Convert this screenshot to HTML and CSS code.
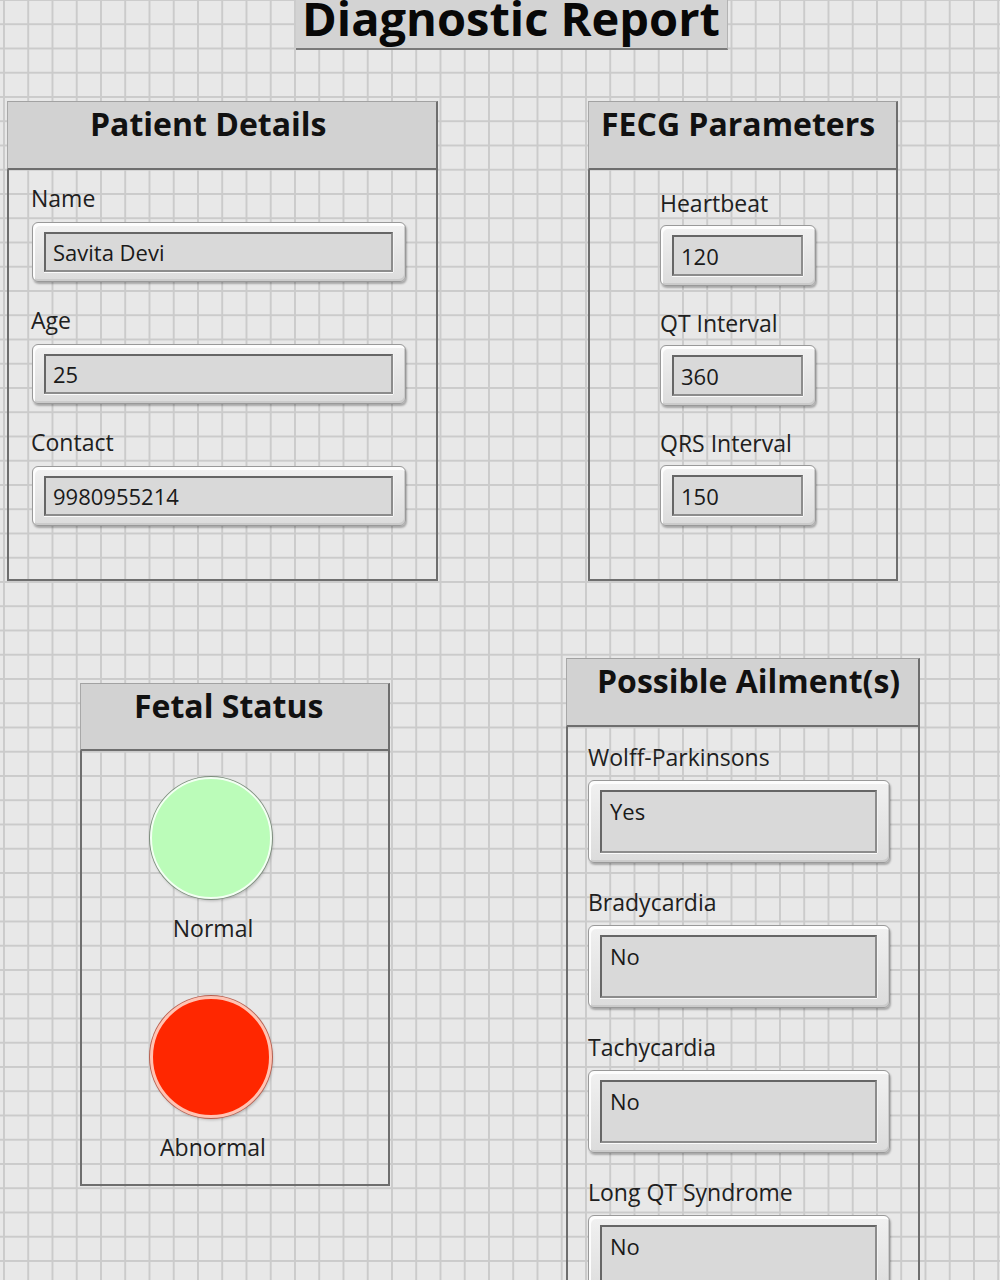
FILE: index.html
```html
<!DOCTYPE html>
<html lang="en">
<head>
<meta charset="utf-8">
<title>Diagnostic Report</title>
<link rel="stylesheet" href="styles.css">
</head>
<body>
<div class="canvas">
  <div class="title-row">
    <h1 class="title">Diagnostic Report</h1>
  </div>

  <div class="row row-top">
    <section class="panel panel-patient">
      <div class="panel-head"><h2>Patient Details</h2></div>
      <div class="panel-body">
        <div class="ctl">
          <div class="ctl-label">Name</div>
          <div class="field"><div class="field-inner">Savita Devi</div></div>
        </div>
        <div class="ctl">
          <div class="ctl-label">Age</div>
          <div class="field"><div class="field-inner">25</div></div>
        </div>
        <div class="ctl">
          <div class="ctl-label">Contact</div>
          <div class="field"><div class="field-inner">9980955214</div></div>
        </div>
      </div>
    </section>

    <section class="panel panel-fecg">
      <div class="panel-head"><h2>FECG Parameters</h2></div>
      <div class="panel-body">
        <div class="ctl">
          <div class="ctl-label">Heartbeat</div>
          <div class="field"><div class="field-inner">120</div></div>
        </div>
        <div class="ctl">
          <div class="ctl-label">QT Interval</div>
          <div class="field"><div class="field-inner">360</div></div>
        </div>
        <div class="ctl">
          <div class="ctl-label">QRS Interval</div>
          <div class="field"><div class="field-inner">150</div></div>
        </div>
      </div>
    </section>
  </div>

  <div class="row row-bottom">
    <section class="panel panel-fetal">
      <div class="panel-head"><h2>Fetal Status</h2></div>
      <div class="panel-body">
        <div class="led-item">
          <div class="led led-green"></div>
          <div class="led-label">Normal</div>
        </div>
        <div class="led-item">
          <div class="led led-red"></div>
          <div class="led-label">Abnormal</div>
        </div>
      </div>
    </section>

    <section class="panel panel-ail">
      <div class="panel-head"><h2>Possible Ailment(s)</h2></div>
      <div class="panel-body">
        <div class="ctl">
          <div class="ctl-label">Wolff-Parkinsons</div>
          <div class="field"><div class="field-inner">Yes</div></div>
        </div>
        <div class="ctl">
          <div class="ctl-label">Bradycardia</div>
          <div class="field"><div class="field-inner">No</div></div>
        </div>
        <div class="ctl">
          <div class="ctl-label">Tachycardia</div>
          <div class="field"><div class="field-inner">No</div></div>
        </div>
        <div class="ctl">
          <div class="ctl-label">Long QT Syndrome</div>
          <div class="field"><div class="field-inner">No</div></div>
        </div>
      </div>
    </section>
  </div>
</div>
</body>
</html>
```

FILE: styles.css
```css
html, body {
  margin: 0;
  padding: 0;
}

body {
  width: 1000px;
  height: 1280px;
  overflow: hidden;
  background-color: #e8e8e8;
  background-image:
    linear-gradient(to right, #cbcbcb 0, #cbcbcb 2px, transparent 2px),
    linear-gradient(to bottom, #cbcbcb 0, #cbcbcb 2px, transparent 2px);
  background-size: 24.25px 24.25px;
  background-position: 3px -1px;
  font-family: "Open Sans", "Noto Sans", "DejaVu Sans", sans-serif;
  color: #1e1e1e;
}

.canvas {
  display: flex;
  flex-direction: column;
}

/* ---------- title ---------- */
.title-row {
  display: flex;
  padding-left: 296px;
}

.title {
  margin: 0;
  width: 432px;
  box-sizing: border-box;
  padding: 0 4px 12px 6px;
  font-size: 47px;
  line-height: 36px;
  font-weight: 700;
  color: #080808;
  background: #d3d3d3;
  border-bottom: 2px solid #7a7a7a;
  border-right: 1px solid #b3b3b3;
  white-space: nowrap;
}

/* ---------- rows ---------- */
.row {
  display: flex;
  align-items: flex-start;
}

.row-top {
  margin-top: 51px;
  padding-left: 7px;
  gap: 150px;
}

.row-bottom {
  margin-top: 77px;
  padding-left: 80px;
  gap: 176px;
}

/* ---------- panels ---------- */
.panel {
  box-sizing: border-box;
  display: flex;
  flex-direction: column;
}

.panel-head {
  box-sizing: border-box;
  height: 69px;
  padding-top: 2px;
  background: #d2d2d2;
  border-top: 1px solid #a2a2a2;
  border-left: 1px solid #a8a8a8;
  border-right: 2px solid #6e6e6e;
  border-bottom: 2px solid #6e6e6e;
}

.panel-head h2 {
  margin: 0;
  font-size: 32px;
  line-height: 40px;
  font-weight: 700;
  color: #111;
  white-space: nowrap;
}

.panel-body {
  box-sizing: border-box;
  display: flex;
  flex-direction: column;
  border: 2px solid #6e6e6e;
  border-top: 0;
}

/* controls */
.ctl {
  display: flex;
  flex-direction: column;
  align-items: flex-start;
}

.ctl-label {
  height: 28px;
  font-size: 23px;
  line-height: 28px;
  color: #202020;
  white-space: nowrap;
}

.field {
  box-sizing: border-box;
  height: 60px;
  padding: 9px 12px 9px 11px;
  border: 1px solid #999;
  border-radius: 6px;
  background: linear-gradient(#f1f1f1, #dcdcdc);
  box-shadow:
    inset 2px 3px 0 #fdfdfd,
    inset -1px -2px 0 #cbcbcb,
    1px 2px 2px rgba(0, 0, 0, 0.28);
}

.field-inner {
  box-sizing: border-box;
  height: 100%;
  display: flex;
  align-items: center;
  padding-left: 7px;
  background: #d9d9d9;
  border: 2px solid;
  border-color: #666 #8c8c8c #8c8c8c #666;
  box-shadow: 0 1px 0 #fafafa, 1px 0 0 #f4f4f4;
  font-size: 22px;
  line-height: 28px;
  color: #1a1a1a;
  white-space: nowrap;
}

/* patient details */
.panel-patient {
  width: 431px;
}

.panel-patient .panel-body {
  height: 411px;
  padding: 14px 0 0 22px;
  gap: 24px;
}

.panel-patient .ctl-label {
  margin-bottom: 10px;
}

.panel-patient .field {
  width: 374px;
  margin-left: 1px;
}

/* fecg */
.panel-fecg {
  width: 310px;
}

.panel-fecg .panel-body {
  height: 411px;
  padding: 19px 0 0 70px;
  gap: 23px;
}

.panel-fecg .ctl-label {
  margin-bottom: 8px;
}

.panel-fecg .field {
  width: 156px;
  height: 61px;
}

/* fetal status */
.panel-fetal {
  width: 310px;
  margin-top: 25px;
}

.panel-fetal .panel-head {
  height: 68px;
}

.panel-fetal .panel-body {
  height: 435px;
  padding: 26px 48px 0 0;
  align-items: center;
  gap: 54px;
}

.led-item {
  display: flex;
  flex-direction: column;
  align-items: center;
}

.led {
  box-sizing: border-box;
  width: 122px;
  height: 122px;
  border-radius: 50%;
}

.led-green {
  background: #bbfcb9;
  border: 2px solid #f3fff3;
  box-shadow: 0 0 0 1px #7d8d7d, 1px 2px 3px rgba(0, 0, 0, 0.22);
}

.led-red {
  background: #ff2700;
  border: 3px solid #ffc3b3;
  box-shadow: 0 0 0 1px #b86050, 1px 2px 3px rgba(0, 0, 0, 0.22);
}

.led-label {
  margin-top: 15px;
  margin-left: 4px;
  font-size: 23px;
  line-height: 28px;
  color: #202020;
}

/* ailments */
.panel-ail {
  width: 354px;
}

.panel-ail .panel-body {
  height: 700px;
  padding: 16px 0 0 20px;
  gap: 25px;
}

.panel-ail .ctl-label {
  margin-bottom: 9px;
}

.panel-ail .field {
  width: 302px;
  height: 83px;
}

.panel-ail .field-inner {
  align-items: flex-start;
  padding-top: 5px;
  padding-left: 8px;
}

/* heading offsets (label placement in the original panel) */
.panel-patient .panel-head h2 { padding-left: 82px; }
.panel-fecg .panel-head h2 { padding-left: 12px; }
.panel-fetal .panel-head h2 { padding-left: 53px; }
.panel-ail .panel-head h2 { padding-left: 30px; }
```
